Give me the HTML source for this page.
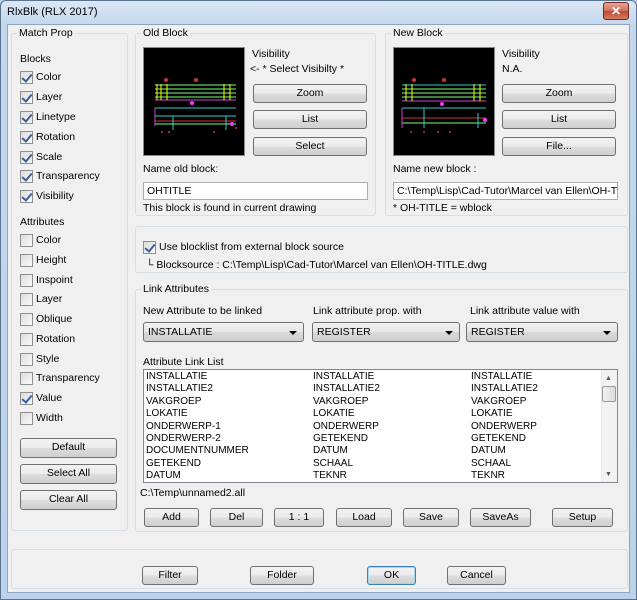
<!DOCTYPE html><html><head><style>
*{box-sizing:border-box;margin:0;padding:0}
body{width:637px;height:600px;overflow:hidden;font-family:"Liberation Sans",sans-serif;font-size:10.5px;color:#000;background:#b9d1ea;position:relative}
.a{position:absolute}
.win{left:0;top:0;width:637px;height:600px;background:linear-gradient(#dbe8f5,#c4d7ec 24px,#bcd2ea);border:1px solid #5b7590;border-radius:6px 6px 0 0}
.client{left:7px;top:24px;width:623px;height:569px;background:#f0f0f0;border:1px solid #8fa6bf}
.g{position:absolute;border:1px solid #d5dfe5;border-radius:3px}
.gl{position:absolute;background:#f0f0f0;padding:0 2px;top:-8px;left:5px;line-height:14px}
.t{position:absolute;line-height:13px;white-space:nowrap}
.cb{position:absolute;width:13px;height:13px;border:1px solid #8f8f8f;background:linear-gradient(135deg,#dcdcdc,#fafafa)}
.cb.k::after{content:"";position:absolute;left:3px;top:0px;width:4px;height:8px;border:solid #3a5f9a;border-width:0 2px 2px 0;transform:rotate(40deg)}
.b{position:absolute;border:1px solid #707070;border-radius:3px;background:linear-gradient(#f2f2f2 0,#ebebeb 50%,#dddddd 51%,#cfcfcf);text-align:center;line-height:17px}
.in{position:absolute;border:1px solid #abadb3;background:#fff;padding-left:3px;line-height:16px;font-size:10.5px;overflow:hidden;white-space:nowrap}
.cmb{position:absolute;border:1px solid #707070;border-radius:3px;background:linear-gradient(#f2f2f2,#e5e5e5 50%,#d9d9d9 51%,#cfcfcf);padding-left:4px;line-height:18px}
.cmb::after{content:"";position:absolute;right:6px;top:8px;border:4px solid transparent;border-top:4px solid #000;border-bottom:0}
.pv{position:absolute;background:#000;border:1px solid #888}
.lst{font-size:10px;line-height:12.4px}
</style></head><body>
<div class="a win"></div>
<div class="t" style="left:7px;top:6px;font-size:11px">RlxBlk (RLX 2017)</div>
<div class="a" style="left:603px;top:2px;width:26px;height:18px;border:1px solid #6d2c25;border-radius:3px;background:linear-gradient(#e8a394,#d1705c 50%,#c04a34 51%,#d27c60);color:#fff;font-weight:bold;text-align:center;line-height:16px;font-size:12px">✕</div>
<div class="a client"></div>

<div class="g" style="left:11px;top:33px;width:117px;height:498px"><div class="gl">Match Prop</div></div>
<div class="t" style="left:20px;top:53px">Blocks</div>
<div class="cb k" style="left:20px;top:71px"></div><div class="t" style="left:36px;top:71px">Color</div>
<div class="cb k" style="left:20px;top:91px"></div><div class="t" style="left:36px;top:91px">Layer</div>
<div class="cb k" style="left:20px;top:111px"></div><div class="t" style="left:36px;top:111px">Linetype</div>
<div class="cb k" style="left:20px;top:131px"></div><div class="t" style="left:36px;top:131px">Rotation</div>
<div class="cb k" style="left:20px;top:151px"></div><div class="t" style="left:36px;top:151px">Scale</div>
<div class="cb k" style="left:20px;top:170px"></div><div class="t" style="left:36px;top:170px">Transparency</div>
<div class="cb k" style="left:20px;top:190px"></div><div class="t" style="left:36px;top:190px">Visibility</div>
<div class="t" style="left:20px;top:216px">Attributes</div>
<div class="cb" style="left:20px;top:234px"></div><div class="t" style="left:36px;top:234px">Color</div>
<div class="cb" style="left:20px;top:254px"></div><div class="t" style="left:36px;top:254px">Height</div>
<div class="cb" style="left:20px;top:274px"></div><div class="t" style="left:36px;top:274px">Inspoint</div>
<div class="cb" style="left:20px;top:293px"></div><div class="t" style="left:36px;top:293px">Layer</div>
<div class="cb" style="left:20px;top:313px"></div><div class="t" style="left:36px;top:313px">Oblique</div>
<div class="cb" style="left:20px;top:333px"></div><div class="t" style="left:36px;top:333px">Rotation</div>
<div class="cb" style="left:20px;top:353px"></div><div class="t" style="left:36px;top:353px">Style</div>
<div class="cb" style="left:20px;top:372px"></div><div class="t" style="left:36px;top:372px">Transparency</div>
<div class="cb k" style="left:20px;top:392px"></div><div class="t" style="left:36px;top:392px">Value</div>
<div class="cb" style="left:20px;top:412px"></div><div class="t" style="left:36px;top:412px">Width</div>
<div class="b" style="left:20px;top:438px;width:97px;height:20px">Default</div>
<div class="b" style="left:20px;top:464px;width:97px;height:20px">Select All</div>
<div class="b" style="left:20px;top:490px;width:97px;height:20px">Clear All</div>

<div class="g" style="left:135px;top:33px;width:241px;height:183px"><div class="gl">Old Block</div></div>
<div class="pv" style="left:143px;top:47px;width:102px;height:109px">
<svg width="100" height="107"><g stroke-width="1"><line x1="11" y1="37" x2="92" y2="37" stroke="#7f7"/><line x1="11" y1="41" x2="92" y2="41" stroke="#7f7"/><line x1="11" y1="45" x2="92" y2="45" stroke="#7f7"/><line x1="11" y1="49" x2="92" y2="49" stroke="#7f7"/><line x1="11" y1="52" x2="92" y2="52" stroke="#c4c"/><line x1="11" y1="60" x2="92" y2="60" stroke="#3cc"/><line x1="11" y1="68" x2="92" y2="68" stroke="#3cc"/><line x1="11" y1="73" x2="92" y2="73" stroke="#c33"/><line x1="11" y1="76" x2="92" y2="76" stroke="#7f7"/><line x1="13" y1="36" x2="13" y2="52" stroke="#ff0"/><line x1="17" y1="36" x2="17" y2="52" stroke="#ff0"/><line x1="23" y1="36" x2="23" y2="52" stroke="#ff0"/><line x1="80" y1="36" x2="80" y2="52" stroke="#ff0"/><line x1="86" y1="36" x2="86" y2="52" stroke="#ff0"/><line x1="11" y1="60" x2="11" y2="78" stroke="#c4c"/><line x1="29" y1="68" x2="29" y2="82" stroke="#3cc"/><line x1="82" y1="68" x2="82" y2="82" stroke="#3cc"/></g><g fill="#c33"><circle cx="22" cy="32" r="2"/><circle cx="52" cy="32" r="2"/><circle cx="18" cy="84" r="1"/><circle cx="25" cy="84" r="1"/><circle cx="70" cy="84" r="1"/><circle cx="92" cy="80" r="1"/></g><circle cx="48" cy="55" r="2" fill="#f3f"/><circle cx="88" cy="76" r="2" fill="#f3f"/></svg></div>
<div class="t" style="left:252px;top:48px">Visibility</div>
<div class="t" style="left:250px;top:63px">&lt;- * Select Visibilty *</div>
<div class="b" style="left:253px;top:84px;width:114px;height:19px">Zoom</div>
<div class="b" style="left:253px;top:110px;width:114px;height:19px">List</div>
<div class="b" style="left:253px;top:137px;width:114px;height:19px">Select</div>
<div class="t" style="left:143px;top:163px">Name old block:</div>
<div class="in" style="left:143px;top:182px;width:225px;height:18px">OHTITLE</div>
<div class="t" style="left:143px;top:202px">This block is found in current drawing</div>

<div class="g" style="left:385px;top:33px;width:243px;height:183px"><div class="gl">New Block</div></div>
<div class="pv" style="left:393px;top:47px;width:102px;height:109px">
<svg width="100" height="107"><g><line x1="8" y1="37" x2="92" y2="37" stroke="#3cc"/><line x1="8" y1="41" x2="92" y2="41" stroke="#7f7"/><line x1="8" y1="45" x2="92" y2="45" stroke="#7f7"/><line x1="8" y1="49" x2="92" y2="49" stroke="#7f7"/><line x1="8" y1="53" x2="92" y2="53" stroke="#c4c"/><line x1="8" y1="60" x2="92" y2="60" stroke="#3cc"/><line x1="8" y1="70" x2="92" y2="70" stroke="#c33"/><line x1="8" y1="75" x2="92" y2="75" stroke="#7f7"/><line x1="12" y1="36" x2="12" y2="53" stroke="#ff0"/><line x1="18" y1="36" x2="18" y2="53" stroke="#ff0"/><line x1="80" y1="36" x2="80" y2="53" stroke="#ff0"/><line x1="86" y1="36" x2="86" y2="53" stroke="#ff0"/><line x1="8" y1="60" x2="8" y2="80" stroke="#c4c"/><line x1="30" y1="60" x2="30" y2="80" stroke="#3cc"/><line x1="84" y1="65" x2="84" y2="80" stroke="#3cc"/></g><g fill="#c33"><circle cx="20" cy="32" r="2"/><circle cx="50" cy="32" r="2"/><circle cx="17" cy="84" r="1"/><circle cx="30" cy="84" r="1"/><circle cx="44" cy="84" r="1"/><circle cx="56" cy="84" r="1"/></g><circle cx="48" cy="56" r="2" fill="#f3f"/><circle cx="91" cy="72" r="2" fill="#f3f"/></svg></div>
<div class="t" style="left:502px;top:48px">Visibility</div>
<div class="t" style="left:502px;top:63px">N.A.</div>
<div class="b" style="left:502px;top:84px;width:114px;height:19px">Zoom</div>
<div class="b" style="left:502px;top:110px;width:114px;height:19px">List</div>
<div class="b" style="left:502px;top:137px;width:114px;height:19px">File...</div>
<div class="t" style="left:393px;top:163px">Name new block :</div>
<div class="in" style="left:393px;top:182px;width:225px;height:18px">C:\Temp\Lisp\Cad-Tutor\Marcel van Ellen\OH-T</div>
<div class="t" style="left:393px;top:202px">* OH-TITLE = wblock</div>

<div class="g" style="left:135px;top:226px;width:493px;height:47px"></div>
<div class="cb k" style="left:143px;top:241px"></div><div class="t" style="left:159px;top:241px">Use blocklist from external block source</div>
<div class="t" style="left:146px;top:259px">└ Blocksource : C:\Temp\Lisp\Cad-Tutor\Marcel van Ellen\OH-TITLE.dwg</div>

<div class="g" style="left:135px;top:289px;width:493px;height:243px"><div class="gl">Link Attributes</div></div>
<div class="t" style="left:143px;top:305px">New Attribute to be linked</div>
<div class="t" style="left:313px;top:305px">Link attribute prop. with</div>
<div class="t" style="left:470px;top:305px">Link attribute value with</div>
<div class="cmb" style="left:143px;top:322px;width:161px;height:20px">INSTALLATIE</div>
<div class="cmb" style="left:312px;top:322px;width:148px;height:20px">REGISTER</div>
<div class="cmb" style="left:466px;top:322px;width:152px;height:20px">REGISTER</div>
<div class="t" style="left:143px;top:356px">Attribute Link List</div>
<div class="a" style="left:143px;top:369px;width:475px;height:114px;background:#fff;border:1px solid #828790"></div>
<div class="a" style="left:601px;top:370px;width:16px;height:112px;background:#f2f2f2;border-left:1px solid #e8e8e8"></div>
<div class="a" style="left:602px;top:386px;width:14px;height:16px;border:1px solid #999;border-radius:2px;background:linear-gradient(90deg,#f0f0f0,#dcdcdc)"></div>
<div class="t" style="left:605px;top:372px;font-size:7px;color:#555">▲</div>
<div class="t" style="left:605px;top:468px;font-size:7px;color:#555">▼</div>
<div class="t lst" style="left:146px;top:371px">INSTALLATIE<br>INSTALLATIE2<br>VAKGROEP<br>LOKATIE<br>ONDERWERP-1<br>ONDERWERP-2<br>DOCUMENTNUMMER<br>GETEKEND<br>DATUM</div>
<div class="t lst" style="left:313px;top:371px">INSTALLATIE<br>INSTALLATIE2<br>VAKGROEP<br>LOKATIE<br>ONDERWERP<br>GETEKEND<br>DATUM<br>SCHAAL<br>TEKNR</div>
<div class="t lst" style="left:471px;top:371px">INSTALLATIE<br>INSTALLATIE2<br>VAKGROEP<br>LOKATIE<br>ONDERWERP<br>GETEKEND<br>DATUM<br>SCHAAL<br>TEKNR</div>
<div class="t" style="left:140px;top:487px">C:\Temp\unnamed2.all</div>
<div class="b" style="left:144px;top:508px;width:55px;height:19px">Add</div>
<div class="b" style="left:210px;top:508px;width:53px;height:19px">Del</div>
<div class="b" style="left:274px;top:508px;width:50px;height:19px">1 : 1</div>
<div class="b" style="left:336px;top:508px;width:56px;height:19px">Load</div>
<div class="b" style="left:403px;top:508px;width:56px;height:19px">Save</div>
<div class="b" style="left:470px;top:508px;width:61px;height:19px">SaveAs</div>
<div class="b" style="left:552px;top:508px;width:61px;height:19px">Setup</div>

<div class="g" style="left:11px;top:549px;width:617px;height:40px"></div>
<div class="b" style="left:142px;top:566px;width:56px;height:19px">Filter</div>
<div class="b" style="left:250px;top:566px;width:64px;height:19px">Folder</div>
<div class="b" style="left:367px;top:566px;width:49px;height:19px;border-color:#3c7fb1;box-shadow:inset 0 0 0 1px #9fd8f5">OK</div>
<div class="b" style="left:447px;top:566px;width:59px;height:19px">Cancel</div>
</body></html>
